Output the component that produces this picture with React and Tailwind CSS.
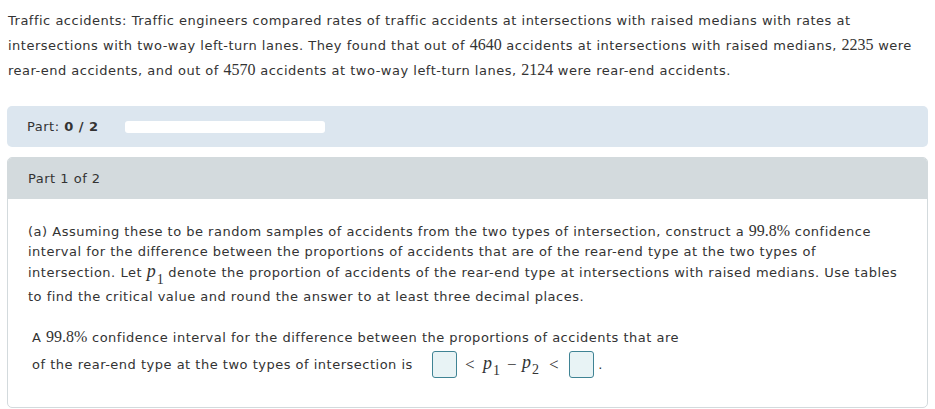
import React from "react";

const sans = { fontFamily: '"DejaVu Sans", Verdana, sans-serif' };
const serif = { fontFamily: '"Liberation Serif", "Times New Roman", serif' };

function N({ children }) {
  return <span className="text-[16px] leading-none tracking-normal" style={serif}>{children}</span>;
}

function P({ sub, grow }) {
  return (
    <span className="text-[18px] italic leading-none tracking-normal" style={serif}>
      p
      <span className={"not-italic text-[14px] leading-none ml-[1px] " + (grow ? "align-[-7px]" : "align-[-6px]")}>{sub}</span>
    </span>
  );
}

function Box() {
  return <span className="inline-block w-[25px] h-[27px] align-middle border border-[#3f8394] bg-[#e8f3f5] rounded-[3px]" />;
}

export default function App() {
  return (
    <div className="w-[935px] h-[409px] bg-white text-[#333] overflow-hidden tracking-[0.5px]" style={sans}>
      <div className="px-[8px] pt-[8px] text-[13px] leading-[25px]">
        Traffic accidents: Traffic engineers compared rates of traffic accidents at intersections with raised medians with rates at
        intersections with two-way left-turn lanes. They found that out of <N>4640</N> accidents at intersections with raised medians, <N>2235</N> were
        rear-end accidents, and out of <N>4570</N> accidents at two-way left-turn lanes, <N>2124</N> were rear-end accidents.
      </div>
      <div className="mx-[7px] mt-[23px] h-[41px] rounded-[5px] bg-[#dce6ef] flex items-center pl-[20px] text-[13px]">
        <span>Part: <b>0 / 2</b></span>
        <div className="ml-[26px] w-[200px] h-[12px] rounded-[3px] bg-white" />
      </div>
      <div className="mx-[7px] mt-[10px] rounded-[5px] border border-[#d3dadd] overflow-hidden">
        <div className="h-[41px] bg-[#d3dadd] flex items-center pl-[20px] text-[13px]">Part 1 of 2</div>
        <div className="px-[20px] pt-[23px] pb-[29px] text-[13px]">
          <div className="leading-[20px]">
            (a) Assuming these to be random samples of accidents from the two types of intersection, construct a <N>99.8%</N> confidence
            interval for the difference between the proportions of accidents that are of the rear-end type at the two types of
            intersection. Let <P sub="1" grow /> denote the proportion of accidents of the rear-end type at intersections with raised medians. Use tables
            to find the critical value and round the answer to at least three decimal places.
          </div>
          <div className="mt-[17px] ml-[4px] leading-[27px]">
            <div>A <N>99.8%</N> confidence interval for the difference between the proportions of accidents that are</div>
            <div className="flex items-center">
              <span>of the rear-end type at the two types of intersection is</span>
              <span className="ml-[19px] flex"><Box /></span>
              <span className="ml-[8px] text-[17px]" style={serif}>&lt;</span>
              <span className="ml-[8px]"><P sub="1" /></span>
              <span className="ml-[7px] mr-[5px] text-[17px]" style={serif}>−</span>
              <P sub="2" />
              <span className="ml-[10px] mr-[10px] text-[17px]" style={serif}>&lt;</span>
              <span className="flex"><Box /></span>
              <span className="ml-[4px]">.</span>
            </div>
          </div>
        </div>
      </div>
    </div>
  );
}
